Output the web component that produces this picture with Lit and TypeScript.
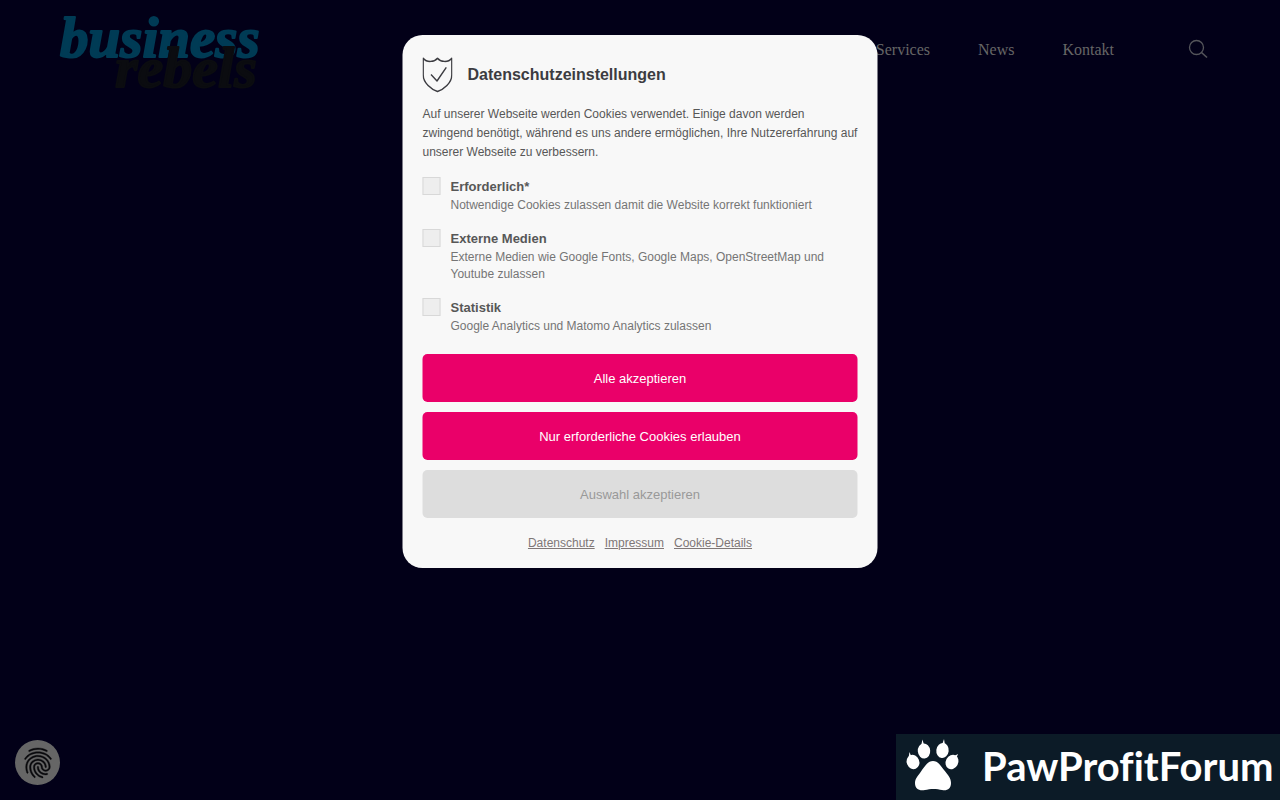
import { LitElement, html, css } from "lit";
import { customElement, state } from "lit/decorators.js";

interface Option {
  id: string;
  label: string;
  text: string;
}

const OPTIONS: Option[] = [
  { id: "required", label: "Erforderlich*", text: "Notwendige Cookies zulassen damit die Website korrekt funktioniert" },
  { id: "media", label: "Externe Medien", text: "Externe Medien wie Google Fonts, Google Maps, OpenStreetMap und Youtube zulassen" },
  { id: "stats", label: "Statistik", text: "Google Analytics und Matomo Analytics zulassen" },
];

@customElement("site-header")
class SiteHeader extends LitElement {
  static styles = css`
    :host { display: block; }
    .bar { display: flex; align-items: center; justify-content: space-between; padding: 0 72px 0 60px; height: 98px; }
    .logo { display: block; width: 204px; height: 98px; overflow: visible; }
    .logo text { font-family: "Liberation Serif", serif; font-weight: bold; font-style: italic; stroke-width: 2px; stroke-linejoin: round; }
    .first { font-size: 57px; fill: #003b55; stroke: #003b55; }
    .second { font-size: 58px; fill: #0b0c10; stroke: #0b0c10; }
    .nav { display: flex; align-items: center; gap: 48px; }
    .link { padding-top: 2px; font: 16px/24px "Liberation Serif", serif; color: #666; text-decoration: none; }
    .search { display: block; margin-left: 26px; padding: 0; border: 0; background: none; height: 20px; cursor: pointer; }
  `;
  render() {
    return html`
      <header class="bar">
        <a href="#" aria-label="business rebels">
          <svg class="logo" viewBox="0 0 204 98">
            <text class="first" x="0" y="57">business</text>
            <text class="second" x="55" y="87">rebels</text>
          </svg>
        </a>
        <nav class="nav">
          <a class="link" href="#">Services</a>
          <a class="link" href="#">News</a>
          <a class="link" href="#">Kontakt</a>
          <button class="search" aria-label="Suche">
            <svg width="20" height="20" viewBox="0 0 20 20" fill="none" stroke="#55555b" stroke-width="1.3">
              <circle cx="8.5" cy="8.5" r="7" /><path d="M13.500 13.500 L19 18.500" stroke-width="1.6" />
            </svg>
          </button>
        </nav>
      </header>
    `;
  }
}

@customElement("cookie-dialog")
class CookieDialog extends LitElement {
  @state() private chosen: string[] = [];

  static styles = css`
    :host { display: block; font-family: "Liberation Sans", Arial, sans-serif; }
    .box { box-sizing: border-box; padding: 20px 20px 16px; border-radius: 20px; background: #f8f8f8; color: #575757; }
    .head { display: flex; align-items: center; gap: 15px; margin-bottom: 11px; }
    .shield { display: block; width: 30px; height: 39px; }
    .title { margin: 0; font-size: 16px; line-height: 24px; color: #3c3c41; }
    .intro { margin: 0 0 15px; font-size: 12px; line-height: 19px; }
    .options { display: grid; gap: 15px; margin: 0 0 19px; padding: 0; border: 0; }
    .option { display: grid; grid-template-columns: 18px 1fr; column-gap: 10px; align-items: start; }
    .tick { appearance: none; box-sizing: border-box; width: 18px; height: 18px; margin: 0; border: 1px solid #d8d8d8; background: #eee; }
    .tick:checked { background: #ea0069; }
    .name { display: block; font-size: 13px; font-weight: bold; line-height: 20px; }
    .text { display: block; font-size: 12px; line-height: 17px; color: #757575; }
    .actions { display: grid; gap: 10px; }
    .button { height: 48px; padding: 2px 8px 0; border: 0; border-radius: 5px; background: #ea0069; color: #fff; font: 13px/20px "Liberation Sans", Arial, sans-serif; cursor: pointer; }
    .button:disabled { background: #ddd; color: #999; cursor: default; }
    .links { display: flex; justify-content: center; gap: 10px; margin-top: 16px; font-size: 12px; line-height: 18px; }
    .links a { color: #7f7777; }
  `;

  private toggle(id: string) {
    this.chosen = this.chosen.includes(id) ? this.chosen.filter((c) => c !== id) : [...this.chosen, id];
  }

  render() {
    return html`
      <section class="box" role="dialog" aria-labelledby="title">
        <div class="head">
          <svg class="shield" viewBox="0 0 30 39" fill="none" stroke="#3c3c41" stroke-width="1.4" stroke-linejoin="round">
            <path d="M0.7 3.2 C4.5 8 12 7 15 3.2 C18 7 25.500 8 29.300 3.200 V20 C29.300 28 21 34.500 15 36.500 C9 34.500 0.700 28 0.700 20 Z" />
            <path d="M8.500 19.500 L14.500 26 L23.800 12.300" />
          </svg>
          <h2 class="title" id="title">Datenschutzeinstellungen</h2>
        </div>
        <p class="intro">Auf unserer Webseite werden Cookies verwendet. Einige davon werden zwingend benötigt, während es uns andere ermöglichen, Ihre Nutzererfahrung auf unserer Webseite zu verbessern.</p>
        <fieldset class="options" aria-labelledby="title">
          ${OPTIONS.map(
            (o) => html`
              <div class="option">
                <input class="tick" type="checkbox" id=${o.id} .checked=${this.chosen.includes(o.id)} @change=${() => this.toggle(o.id)} />
                <label for=${o.id}><span class="name">${o.label}</span><span class="text">${o.text}</span></label>
              </div>
            `,
          )}
        </fieldset>
        <div class="actions">
          <button class="button">Alle akzeptieren</button>
          <button class="button">Nur erforderliche Cookies erlauben</button>
          <button class="button" ?disabled=${this.chosen.length === 0}>Auswahl akzeptieren</button>
        </div>
        <nav class="links">
          <a href="#">Datenschutz</a><a href="#">Impressum</a><a href="#">Cookie-Details</a>
        </nav>
      </section>
    `;
  }
}

@customElement("app-root")
class AppRoot extends LitElement {
  static styles = css`
    :host { display: block; min-height: 100vh; background: #020018; }
    .dialog { position: fixed; top: 35px; left: 50%; width: 475px; max-width: calc(100% - 32px); transform: translateX(-50%); }
    .finger { position: fixed; left: 15px; bottom: 15px; width: 45px; height: 45px; padding: 0; border: 0; border-radius: 50%; background: #666; cursor: pointer; }
    .finger svg { display: block; margin: auto; }
    .banner { position: fixed; right: 0; bottom: 0; display: flex; align-items: center; gap: 20px; box-sizing: border-box; width: 384px; height: 66px; padding-left: 8px; background: #0c1b27; color: #fff; }
    .paw { display: block; flex: none; }
    .brand { padding-bottom: 2px; font: 700 40px/60px "Lato", sans-serif; font-variant-ligatures: none; white-space: nowrap; }
  `;
  render() {
    return html`
      <site-header></site-header>
      <cookie-dialog class="dialog"></cookie-dialog>
      <button class="finger" aria-label="Cookie-Einstellungen">
        <svg width="36" height="36" viewBox="0 0 24 24" fill="#08080c" stroke="#08080c" stroke-width="0.25">
          <path d="M17.81 4.47c-.08 0-.16-.02-.23-.06C15.66 3.42 14 3 12.01 3c-1.98 0-3.86.47-5.57 1.41-.24.13-.54.04-.68-.2-.13-.24-.04-.55.2-.68C7.82 2.52 9.86 2 12.01 2c2.13 0 3.99.47 6.03 1.52.25.13.34.43.21.67-.09.18-.26.28-.44.28zM3.5 9.72c-.1 0-.2-.03-.29-.09-.23-.16-.28-.47-.12-.7.99-1.4 2.25-2.5 3.75-3.27C9.98 4.04 14 4.03 17.15 5.65c1.5.77 2.76 1.86 3.75 3.25.16.22.11.54-.12.7-.23.16-.54.11-.7-.12-.9-1.26-2.04-2.25-3.39-2.94-2.87-1.47-6.54-1.47-9.4.01-1.36.7-2.5 1.7-3.4 2.96-.08.14-.23.21-.39.21zm6.25 12.07c-.13 0-.26-.05-.35-.15-.87-.87-1.34-1.43-2.01-2.64-.69-1.23-1.05-2.73-1.05-4.34 0-2.97 2.54-5.39 5.66-5.39s5.66 2.42 5.66 5.39c0 .28-.22.5-.5.5s-.5-.22-.5-.5c0-2.42-2.09-4.39-4.66-4.39-2.57 0-4.66 1.97-4.66 4.39 0 1.44.32 2.77.93 3.85.64 1.15 1.08 1.64 1.85 2.42.19.2.19.51 0 .71-.11.1-.24.15-.37.15zm7.17-1.85c-1.19 0-2.24-.3-3.1-.89-1.49-1.01-2.38-2.65-2.38-4.39 0-.28.22-.5.5-.5s.5.22.5.5c0 1.41.72 2.74 1.94 3.56.71.48 1.54.71 2.54.71.24 0 .64-.03 1.04-.1.27-.05.53.13.58.41.05.27-.13.53-.41.58-.57.11-1.07.12-1.21.12zM14.91 22c-.04 0-.09-.01-.13-.02-1.59-.44-2.63-1.03-3.72-2.1-1.4-1.39-2.17-3.24-2.17-5.22 0-1.62 1.38-2.94 3.08-2.94 1.7 0 3.08 1.32 3.08 2.94 0 1.07.93 1.94 2.08 1.94s2.08-.87 2.08-1.94c0-3.77-3.25-6.83-7.25-6.83-2.84 0-5.44 1.58-6.61 4.03-.39.81-.59 1.76-.59 2.8 0 .78.07 2.01.67 3.61.1.26-.03.55-.29.64-.26.1-.55-.04-.64-.29-.49-1.31-.73-2.61-.73-3.96 0-1.2.23-2.29.68-3.24 1.33-2.79 4.28-4.6 7.51-4.6 4.55 0 8.25 3.51 8.25 7.83 0 1.62-1.38 2.94-3.08 2.94s-3.08-1.32-3.08-2.94c0-1.07-.93-1.94-2.08-1.94s-2.08.87-2.08 1.94c0 1.71.66 3.31 1.87 4.51.95.94 1.86 1.46 3.27 1.85.27.07.42.35.35.61-.05.23-.26.38-.47.38z" />
        </svg>
      </button>
      <aside class="banner">
        <svg class="paw" width="58" height="60" viewBox="0 0 58 60" fill="#fff">
          <ellipse cx="9" cy="25" rx="6.300" ry="7.300" transform="rotate(-22 9 25)" />
          <ellipse cx="20" cy="14" rx="6.200" ry="7.600" transform="rotate(-5 20 14)" />
          <ellipse cx="38.500" cy="13.500" rx="6.200" ry="7.600" transform="rotate(7 38.500 13.500)" />
          <ellipse cx="48" cy="25" rx="6.200" ry="7.500" transform="rotate(28 48 25)" />
          <path d="M4.500 21 L5.500 15 L7.500 20Z M17 9 L18.500 2.500 L20 8Z M38 8 L40 2 L41 8Z M48 20 L54 17 L52 22Z" />
          <path d="M29 24 C34 24 37 29 40 33 C44 38 47 41 47 46 C47 52 43 54 38 53 C33 51.500 26 51.500 21 53 C15 54 11 52 11 46 C11 41 15 38 18 33 C21 29 24 24 29 24Z" />
        </svg>
        <span class="brand">PawProfitForum</span>
      </aside>
    `;
  }
}
